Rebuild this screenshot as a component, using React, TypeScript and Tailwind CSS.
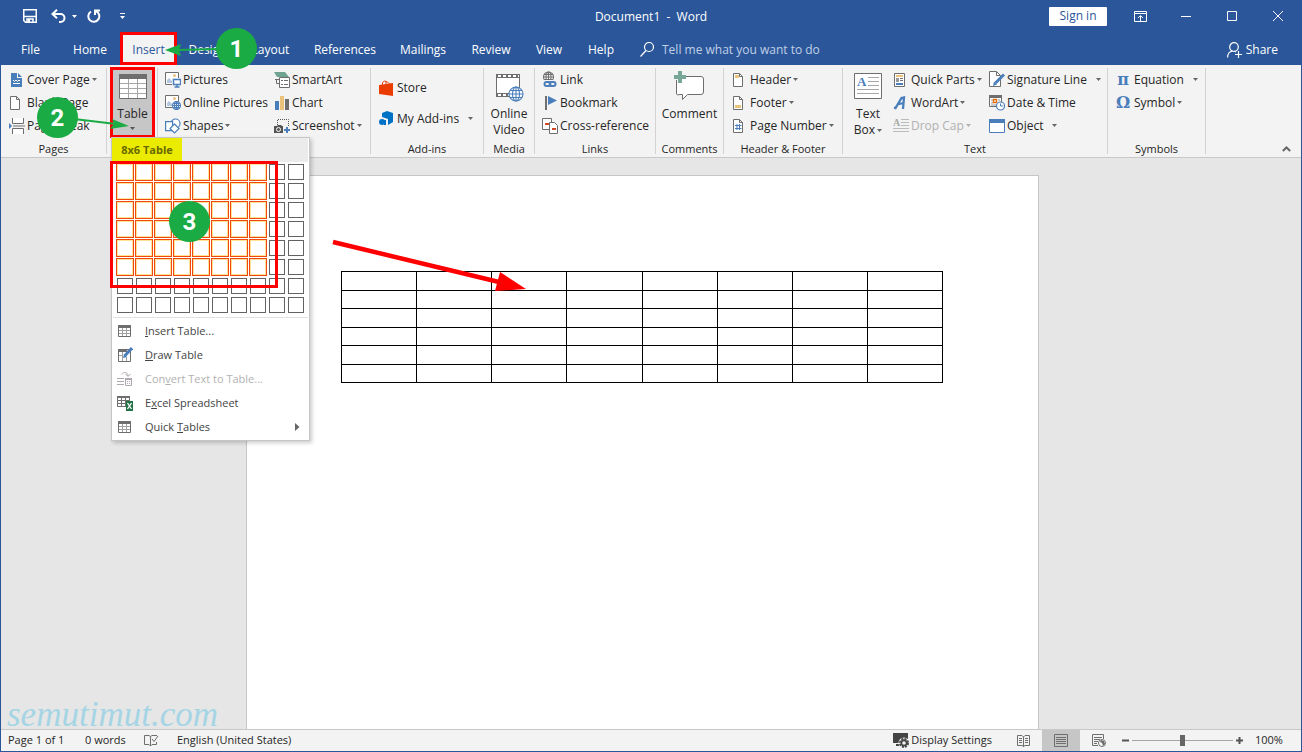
import React, { FC, ReactNode } from "react";
import clsx from "clsx";

const BLUE = "#4a7ebb";
const GRAY = "#6e6e6e";

const Icon: FC<{ w: number; h: number; children: ReactNode }> = ({ w, h, children }) => (
  <svg width={w} height={h} viewBox={`0 0 ${w} ${h}`} fill="none" className="shrink-0" aria-hidden="true">
    {children}
  </svg>
);

const Caret: FC<{ className?: string }> = ({ className }) => (
  <svg width="5" height="3" viewBox="0 0 5 3" className={clsx("shrink-0", className)} aria-hidden="true">
    <path d="M0 0h5L2.500 3z" fill="currentColor" />
  </svg>
);

/* ---------- ribbon icons, 16px ---------- */

const CoverPageIcon = () => (
  <Icon w={16} h={16}>
    <path d="M2 1h6v5h5v9H2z" fill={BLUE} />
    <path d="M9 1l4 4H9z" fill={BLUE} />
    <path d="M4 8l1.500 1.500L7 8l1.500 1.500L10 8l1 1M4 11.500h7" stroke="#fff" />
  </Icon>
);

const PageIcon: FC<{ children?: ReactNode }> = ({ children }) => (
  <Icon w={16} h={16}>
    <path d="M1.500 1.500h6l3 3v10h-9z" fill="#fff" stroke={GRAY} />
    <path d="M7.500 1.500v3h3" stroke={GRAY} />
    {children}
  </Icon>
);

const PageBreakIcon = () => (
  <Icon w={16} h={16}>
    <path d="M4 0v5h11V0M4 16v-5h11v5" fill="#fff" />
    <path d="M3.500 0v5.500h11V0M3.500 16v-5.500h11V16M4 8h12" stroke={GRAY} />
    <path d="M0 5l3 3-3 3z" fill={BLUE} />
  </Icon>
);

const PictureBase = () => (
  <>
    <path d="M.5 1.500h13v12H.5z" fill="#fff" stroke={GRAY} />
    <path d="M2 12V9l2-2 3 3v2z" fill="#b4c7e0" />
    <circle cx="9.500" cy="4.500" r="1.500" fill="#ecc17a" />
  </>
);

const PicturesIcon = () => (
  <Icon w={16} h={17}>
    <PictureBase />
    <path d="M7 7h9v10H7z" fill="#f3f3f3" />
    <path d="M8.500 8.500h7v5h-7zM12 14v2M9.500 16h5" fill="#fff" stroke={BLUE} strokeWidth="1.400" />
  </Icon>
);

const Globe: FC<{ cx: number; cy: number; r: number; color?: string }> = ({ cx, cy, r, color = BLUE }) => (
  <g stroke={color} strokeWidth="1.100">
    <circle cx={cx} cy={cy} r={r} fill="#fff" />
    <ellipse cx={cx} cy={cy} rx={r / 2} ry={r} />
    <path d={`M${cx - r} ${cy}h${2 * r}M${cx} ${cy - r}v${2 * r}M${cx - r * 0.85} ${cy - r / 2}h${r * 1.7}M${cx - r * 0.85} ${cy + r / 2}h${r * 1.7}`} />
  </g>
);

const OnlinePicturesIcon = () => (
  <Icon w={16} h={17}>
    <PictureBase />
    <Globe cx={11.5} cy={11.5} r={4} />
  </Icon>
);

const ShapesIcon = () => (
  <Icon w={16} h={16}>
    <circle cx="10.500" cy="5.500" r="4.500" fill="#fff" stroke={BLUE} strokeWidth="1.200" />
    <path d="M.6 3.600h7v9h-7z" fill="#fff" stroke={BLUE} strokeWidth="1.200" />
    <path d="M9.500 6l4.500 4.500L9.500 15 5 10.500z" fill="#fff" stroke={BLUE} strokeWidth="1.200" />
  </Icon>
);

const SmartArtIcon = () => (
  <Icon w={16} h={16}>
    <path d="M0 0h11l4 5H3z" fill="#6fa590" />
    <path d="M5.500 5.500h10v10h-10z" fill="#fff" stroke={GRAY} />
    <path d="M7 8.500h2M10 8.500h4M7 12.500h2M10 12.500h4" stroke={GRAY} />
    <path d="M2.500 7v4.500H5M1 7.500h4" stroke={GRAY} />
  </Icon>
);

const ChartIcon = () => (
  <Icon w={16} h={16}>
    <path d="M1 6h4v9H1z" fill={BLUE} />
    <path d="M6 1h4v14H6z" fill="#ecc17a" />
    <path d="M11 4h4v11h-4z" fill={GRAY} />
  </Icon>
);

const ScreenshotIcon = () => (
  <Icon w={16} h={16}>
    <path d="M3.500 7V1.500h11V8" stroke="#555" strokeDasharray="1 1" />
    <path d="M0 8h3l1-1h3l1 1h1v7H0z" fill="#555" />
    <circle cx="4.500" cy="11.500" r="2" fill="#555" stroke="#fff" />
    <path d="M13 9v6M10 12h6" stroke={BLUE} strokeWidth="2" />
  </Icon>
);

const StoreIcon = () => (
  <Icon w={15} h={16}>
    <path d="M3.500 5V2.500l2-1.500 3 1 2 2M7 4V2" stroke="#eb3c00" />
    <path d="M0 5l14-2v13L0 14z" fill="#eb3c00" />
  </Icon>
);

const AddinsIcon = () => (
  <Icon w={15} h={15}>
    <path d="M8 0l6 2v9l-5 3V8L3 6V2z" fill="#0072c6" />
    <circle cx="3" cy="11" r="3" fill="#0072c6" />
    <path d="M4 9h3v5H5z" fill="#0072c6" />
  </Icon>
);

const OnlineVideoIcon = () => (
  <Icon w={29} h={29}>
    <path d="M1.500 1.500h23v22h-23z" fill="#fff" stroke={GRAY} />
    <path d="M1 3h24M1 22h24" stroke={GRAY} strokeWidth="4" />
    <path d="M3 3h21M3 22h21" stroke="#fff" strokeWidth="2" strokeDasharray="3 2" />
    <Globe cx={21} cy={21} r={7} />
  </Icon>
);

const LinkIcon = () => (
  <Icon w={16} h={17}>
    <Globe cx={6.5} cy={6} r={5} color={GRAY} />
    <path d="M1 9h15v8H1z" fill="#f3f3f3" />
    <path d="M8 11H4.500a2 2 0 000 4H7l2-2.500M8 15h3.500a2 2 0 000-4H9l-2 2.500" stroke={BLUE} strokeWidth="2" />
  </Icon>
);

const BookmarkIcon = () => (
  <Icon w={16} h={16}>
    <path d="M3 1h2v14H3z" fill={GRAY} />
    <path d="M6 1l9 4.500L6 10z" fill={BLUE} />
  </Icon>
);

const CrossRefIcon = () => (
  <Icon w={16} h={16}>
    <path d="M.5.500h9v11h-9z" fill="#fff" stroke={GRAY} />
    <path d="M7.500 4.500h5l3 3v8h-8z" fill="#fff" stroke={GRAY} />
    <path d="M3 5h4v2H3zM10 10h4v2h-4z" fill="#d24726" />
  </Icon>
);

const CommentIcon = () => (
  <Icon w={32} h={30}>
    <path d="M6 5.500h21a2.500 2.500 0 012.500 2.500v13a2.500 2.500 0 01-2.500 2.500H13.500l-5 5v-5H5A1.500 1.500 0 012.500 22V9" fill="#fff" stroke={GRAY} />
    <path d="M4 0h4v4h4v4H8v4H4V8H0V4h4z" fill="#76a797" />
  </Icon>
);

const TextBoxIcon = () => (
  <Icon w={28} h={26}>
    <path d="M.5.500h27v25H.5z" fill="#fff" stroke={GRAY} />
    <path d="M14 4.500h11M14 8.500h11M14 12.500h11M3 16.500h22M3 20.500h22" stroke="#a6a6a6" />
    <text x="3" y="13" fontSize="13" fontWeight="bold" fill={BLUE} fontFamily="Liberation Serif, serif">A</text>
  </Icon>
);

const QuickPartsIcon = () => (
  <Icon w={14} h={16}>
    <path d="M1.500 1.500h10v13h-10z" fill="#fff" stroke={GRAY} />
    <path d="M3 3h7v2H3z" fill="#ecc17a" />
    <path d="M3 6h3v4H3z" fill="#999" />
    <path d="M7 6.500h3M7 8.500h3" stroke={GRAY} />
    <path d="M3 11h7v2H3z" fill={BLUE} />
  </Icon>
);

const WordArtIcon = () => (
  <Icon w={14} h={16}>
    <path d="M1 12.500l1.500.5L8.500 3l2.500-.5-1 11.500M4 9.500l6.500-1.500" stroke={BLUE} strokeWidth="2.300" />
  </Icon>
);

const DropCapIcon = () => (
  <Icon w={16} h={16}>
    <path d="M8 1.500h8M8 4.500h8M8 7.500h8M0 10.500h16M0 13.500h16" stroke="#bbb" />
    <text x="0" y="8" fontSize="10" fontWeight="bold" fill="#aaa" fontFamily="Liberation Serif, serif">A</text>
  </Icon>
);

const SignatureIcon = () => (
  <Icon w={16} h={17}>
    <path d="M.5.500h7l4 4v11H.5z" fill="#fff" stroke={GRAY} />
    <path d="M7.500.500v4h4" stroke={GRAY} />
    <path d="M15 3.500L6.500 12" stroke={BLUE} strokeWidth="3" />
    <path d="M5 10.500l3 3-4 1.500z" fill={BLUE} />
  </Icon>
);

const DateIcon = () => (
  <Icon w={16} h={17}>
    <path d="M.5 1.500h12v11H.5z" fill="#fff" stroke={GRAY} />
    <path d="M0 1h13v3H0z" fill={GRAY} />
    <path d="M2 6h2M2 9h2M9 6h2M2 11h5" stroke="#999" />
    <path d="M4.500 5.500h3v3h-3z" stroke="#e36c09" strokeWidth="1.400" />
    <circle cx="11.500" cy="12" r="4" fill="#fff" stroke={BLUE} strokeWidth="1.200" />
    <path d="M11.500 9.500V12H14" stroke={BLUE} />
  </Icon>
);

const ObjectIcon = () => (
  <Icon w={16} h={16}>
    <path d="M.5 1.500h15v13H.5z" fill="#fff" stroke={BLUE} />
    <path d="M0 1h16v4H0z" fill={BLUE} />
  </Icon>
);

const Glyph: FC<{ children: ReactNode }> = ({ children }) => (
  <span className="w-[14px] text-center font-['DejaVu_Serif',serif] text-base leading-4 font-bold text-[#4a7ebb]">
    {children}
  </span>
);

const BigTableIcon = () => (
  <Icon w={28} h={25}>
    <path d="M.5.500h27v24H.5z" fill="#fff" stroke={GRAY} />
    <path d="M0 0h28v5H0z" fill={GRAY} />
    <path d="M9.500 5v19M18.500 5v19M1 9.500h26M1 14.500h26M1 19.500h26" stroke="#a6a6a6" />
  </Icon>
);

/* ---------- menu icons ---------- */

const SmallTableIcon = () => (
  <Icon w={16} h={16}>
    <path d="M1.500 2.500h12v11h-12z" fill="#fff" stroke={GRAY} />
    <path d="M1 2h13v3H1z" fill={GRAY} />
    <path d="M5.500 5v8M9.500 5v8M2 7.500h11M2 10.500h11" stroke="#a0a0a0" />
  </Icon>
);

const DrawTableIcon = () => (
  <Icon w={16} h={16}>
    <path d="M1.500 2.500h12v12h-12z" fill="#fff" stroke={GRAY} />
    <path d="M1 2h9v3H1z" fill={GRAY} />
    <path d="M5.500 5v9M2 8.500h4M9.500 10v4" stroke="#a0a0a0" />
    <path d="M15 1L8 8.500" stroke={BLUE} strokeWidth="3" />
    <path d="M7 7l3 3-4 1z" fill={BLUE} />
  </Icon>
);

const ConvertIcon = () => (
  <Icon w={16} h={16}>
    <path d="M0 7.500h7M0 10.500h7M0 13.500h7" stroke="#b0a8b0" />
    <path d="M5 3.500c1-3 6-3 6 1.500M8.500 3L11 5.500 13.500 3" stroke="#b0a8b0" />
    <path d="M8.500 7.500h6v7h-6z" stroke="#b0a8b0" />
    <path d="M8 7h7v2H8zM10 10h1v1h-1zM12 10h1v1h-1zM10 12h1v1h-1zM12 12h1v1h-1z" fill="#b0a8b0" />
  </Icon>
);

const ExcelIcon = () => (
  <Icon w={16} h={16}>
    <path d="M.5 1.500h12v10H.5z" fill="#fff" stroke={GRAY} />
    <path d="M0 1h13v2H0z" fill={GRAY} />
    <path d="M4.500 3v8M8.500 3v8M1 5.500h12M1 8.500h12" stroke={GRAY} />
    <path d="M9 6h7v10H9z" fill="#217346" />
    <path d="M10.500 8l4 6M14.500 8l-4 6" stroke="#fff" strokeWidth="1.300" />
  </Icon>
);

/* ---------- ribbon pieces ---------- */

interface GroupI {
  label: string;
  width: string;
  hideLabel?: boolean;
  children: ReactNode;
}

const Group: FC<GroupI> = ({ label, width, hideLabel, children }) => (
  <section aria-label={label} className={clsx("relative flex h-[86px] shrink-0 flex-col border-r border-[#d2d2d2]", width)}>
    <div className="flex h-[70px] shrink-0 items-start">{children}</div>
    {!hideLabel && <div className="flex h-[22px] shrink-0 items-center justify-center text-[11px] whitespace-nowrap">{label}</div>}
  </section>
);

interface ItemI {
  icon: ReactNode;
  text: string;
  caret?: boolean;
  split?: boolean;
  disabled?: boolean;
}

const Item: FC<ItemI> = ({ icon, text, caret, split, disabled }) => (
  <button
    type="button"
    disabled={disabled}
    className={clsx("flex h-[23px] items-center whitespace-nowrap", disabled && "text-[#b1b1b1]")}
  >
    <span className="flex w-[18px] shrink-0 items-center">{icon}</span>
    {text}
    {caret && <Caret className={clsx(split ? "ml-[9px]" : "ml-[2px]", disabled ? "text-[#b1b1b1]" : "text-[#666]")} />}
  </button>
);

const tabs = [
  { name: "File", width: "w-[59px]" },
  { name: "Home", width: "w-[60px]" },
  { name: "Insert", width: "w-[57px]" },
  { name: "Design", width: "w-[61px]" },
  { name: "Layout", width: "w-[65px]" },
  { name: "References", width: "w-[84px]" },
  { name: "Mailings", width: "w-[72px]" },
  { name: "Review", width: "w-[64px]" },
  { name: "View", width: "w-[52px]" },
  { name: "Help", width: "w-[52px]" },
];

const TitleBar = () => (
  <header className="flex h-8 items-center justify-between">
    <div className="flex flex-1 items-center">
      <button type="button" aria-label="Save" className="ml-[22px]">
        <Icon w={14} h={14}>
          <path d="M.750.750h12.500v12.500H2.500L.750 11.500z" stroke="#fff" strokeWidth="1.500" />
          <path d="M1 7.500h12M4 13V10h6v3" stroke="#fff" strokeWidth="1.500" />
          <path d="M5 10h2v3H5z" fill="#fff" />
        </Icon>
      </button>
      <button type="button" aria-label="Undo" className="ml-[14px] flex items-center gap-[5px] text-white">
        <Icon w={16} h={14}>
          <path d="M1.500 5h8a4 4 0 010 8H8M6 .8L1.500 5 6 9.200" stroke="#fff" strokeWidth="2" />
        </Icon>
        <Caret />
      </button>
      <button type="button" aria-label="Redo" className="ml-[10px]">
        <Icon w={14} h={14}>
          <path d="M4 2.500A5.500 5.500 0 108.500 2M8 6V1.500h5" stroke="#fff" strokeWidth="2" />
        </Icon>
      </button>
      <button type="button" aria-label="Customize Quick Access Toolbar" className="ml-[19px]">
        <Icon w={5} h={7}>
          <path d="M0 .5h5" stroke="#fff" />
          <path d="M0 3h5L2.500 6z" fill="#fff" />
        </Icon>
      </button>
    </div>
    <h1 className="pt-[2px] whitespace-pre text-white">Document1  -  Word</h1>
    <div className="flex flex-1 items-center justify-end">
      <button type="button" className="mr-[10px] h-[19px] w-[58px] rounded-[1px] bg-white text-[#2b579a]">Sign in</button>
      <button type="button" aria-label="Ribbon Display Options" className="flex h-8 w-[46px] items-center justify-center">
        <Icon w={13} h={11}>
          <path d="M.5.500h12v10H.5zM0 2.500h13M6.500 10V5M4 7l2.500-2.500L9 7" stroke="#fff" />
        </Icon>
      </button>
      <button type="button" aria-label="Minimize" className="flex h-8 w-[46px] items-center justify-center">
        <Icon w={10} h={1}><path d="M0 .5h10" stroke="#fff" /></Icon>
      </button>
      <button type="button" aria-label="Maximize" className="flex h-8 w-[46px] items-center justify-center">
        <Icon w={10} h={10}><path d="M.5.500h9v9h-9z" stroke="#fff" /></Icon>
      </button>
      <button type="button" aria-label="Close" className="flex h-8 w-[46px] items-center justify-center">
        <Icon w={10} h={10}><path d="M0 0l10 10M10 0L0 10" stroke="#fff" /></Icon>
      </button>
    </div>
  </header>
);

const TabBar = () => (
  <nav className="flex h-[33px] text-white">
    {tabs.map(({ name, width }) => (
      <button
        key={name}
        type="button"
        className={clsx(
          "shrink-0 pt-[2px] whitespace-nowrap",
          width,
          name === "Insert" && "border-[3px] border-[#ff0000] bg-[#f3f3f3] text-[#2b579a]"
        )}
      >
        {name}
      </button>
    ))}
    <label className="flex flex-1 items-center gap-2 pl-[13px] pt-[2px]">
      <Icon w={14} h={15}>
        <circle cx="9" cy="5" r="4.500" stroke="#fff" strokeWidth="1.200" />
        <path d="M6 8.500L.5 14.500" stroke="#fff" strokeWidth="1.200" />
      </Icon>
      <input
        type="text"
        aria-label="Tell me"
        placeholder="Tell me what you want to do"
        className="w-60 bg-transparent outline-none placeholder:text-[#c0cfe6]"
      />
    </label>
    <button type="button" className="flex items-center gap-1 pr-[23px] pt-[2px]">
      <Icon w={15} h={16}>
        <circle cx="7" cy="5" r="4.300" stroke="#fff" strokeWidth="1.200" />
        <path d="M.6 15.500c0-4 2-6 5-6.500M8 9.500l1 .5M11.500 9v7M8 12.500h7" stroke="#fff" strokeWidth="1.200" />
      </Icon>
      Share
    </button>
  </nav>
);

/* ---------- table menu ---------- */

const COLS = 8;
const ROWS = 6;
const cells = Array.from({ length: 80 }, (_, i) => ({
  id: i,
  selected: i % 10 < COLS && Math.floor(i / 10) < ROWS,
}));

const Step: FC<{ n: number; className: string }> = ({ n, className }) => (
  <span
    className={clsx(
      "pointer-events-none absolute z-30 flex h-[41px] w-[41px] items-center justify-center rounded-full bg-[#1bab45] font-['Roboto',sans-serif] text-2xl font-bold text-white",
      className
    )}
  >
    {n}
  </span>
);

const MenuItem: FC<{ icon: ReactNode; children: ReactNode; disabled?: boolean; arrow?: boolean }> = ({
  icon,
  children,
  disabled,
  arrow,
}) => (
  <button
    type="button"
    role="menuitem"
    disabled={disabled}
    className={clsx("flex h-6 w-full items-center pl-[5px] pr-[9px] text-left", disabled ? "text-[#b1b1b1]" : "text-[#444]")}
  >
    <span className="w-7 shrink-0">{icon}</span>
    <span className="flex-1 whitespace-nowrap">{children}</span>
    {arrow && <Icon w={5} h={8}><path d="M0 0l4.500 4L0 8z" fill="#666" /></Icon>}
  </button>
);

const TableMenu = () => (
  <div role="menu" className="absolute top-[69px] left-1 z-20 w-[199px] border border-[#c6c6c6] bg-white pb-px text-[11px] shadow-[2px_2px_4px_rgba(0,0,0,0.2)]">
    <div className="mr-px flex h-6 bg-[#ebebeb] font-bold">
      <span className="flex w-[70px] items-center justify-center whitespace-nowrap bg-[#ebeb00] text-[#6a6a00]">8x6 Table</span>
    </div>
    <div className="grid grid-cols-10 gap-px py-px pr-1 pl-1">
      {cells.map(({ id, selected }) =>
        selected ? (
          <button key={id} type="button" aria-label="Table cell" className="h-[18px] w-[18px] border border-[#ef4810] bg-white ring-1 ring-inset ring-[#ffe294]" />
        ) : (
          <button key={id} type="button" aria-label="Table cell" className="m-px h-4 w-4 border border-[#636363] bg-white" />
        )
      )}
    </div>
    <div className="mx-px mt-[2px] mb-px h-px bg-[#e1e1e1]" />
    <MenuItem icon={<SmallTableIcon />}><u>I</u>nsert Table...</MenuItem>
    <MenuItem icon={<DrawTableIcon />}><u>D</u>raw Table</MenuItem>
    <MenuItem icon={<ConvertIcon />} disabled>Con<u>v</u>ert Text to Table...</MenuItem>
    <MenuItem icon={<ExcelIcon />}>E<u>x</u>cel Spreadsheet</MenuItem>
    <MenuItem icon={<SmallTableIcon />} arrow>Quick <u>T</u>ables</MenuItem>
    <div className="pointer-events-none absolute top-[23px] -left-[2px] h-[127px] w-[168px] border-[3px] border-[#ff0000]" />
    <Step n={3} className="top-[63px] left-[57px]" />
  </div>
);

const Ribbon = () => (
  <div className="relative flex h-[93px] shrink-0 border-b border-[#c8c8c8] bg-[#f3f3f3] pt-[3px]">
    <Group label="Pages" width="w-[106px]">
      <div className="flex flex-col pl-2">
        <Item icon={<CoverPageIcon />} text="Cover Page" caret />
        <Item icon={<PageIcon />} text="Blank Page" />
        <Item icon={<PageBreakIcon />} text="Page Break" />
      </div>
    </Group>
    <Group label="Tables" width="w-[51px]" hideLabel>
      <button
        type="button"
        className="-mt-px ml-[3px] flex h-[71px] w-[45px] flex-col items-center border-[3px] border-[#ff0000] bg-[#c6c6c6] pt-1"
      >
        <BigTableIcon />
        <span className="mt-[7px] leading-4">Table</span>
        <Caret className="mt-[5px] text-[#555]" />
      </button>
      <TableMenu />
    </Group>
    <Group label="Illustrations" width="w-[213px]" hideLabel>
      <div className="flex w-[109px] flex-col pl-[7px]">
        <Item icon={<PicturesIcon />} text="Pictures" />
        <Item icon={<OnlinePicturesIcon />} text="Online Pictures" />
        <Item icon={<ShapesIcon />} text="Shapes" caret />
      </div>
      <div className="flex flex-col pl-[7px]">
        <Item icon={<SmartArtIcon />} text="SmartArt" />
        <Item icon={<ChartIcon />} text="Chart" />
        <Item icon={<ScreenshotIcon />} text="Screenshot" caret />
      </div>
    </Group>
    <Group label="Add-ins" width="w-[113px]">
      <div className="flex flex-col gap-2 pt-2 pl-2">
        <Item icon={<StoreIcon />} text="Store" />
        <Item icon={<AddinsIcon />} text="My Add-ins" caret split />
      </div>
    </Group>
    <Group label="Media" width="w-[51px]">
      <button type="button" className="flex w-full flex-col items-center pt-[5px] leading-4">
        <OnlineVideoIcon />
        <span className="mt-1">Online<br />Video</span>
      </button>
    </Group>
    <Group label="Links" width="w-[121px]">
      <div className="flex flex-col pl-[7px]">
        <Item icon={<LinkIcon />} text="Link" />
        <Item icon={<BookmarkIcon />} text="Bookmark" />
        <Item icon={<CrossRefIcon />} text="Cross-reference" />
      </div>
    </Group>
    <Group label="Comments" width="w-[68px]">
      <button type="button" className="flex w-full flex-col items-center pt-[3px] leading-4">
        <CommentIcon />
        <span className="mt-[5px]">Comment</span>
      </button>
    </Group>
    <Group label="Header & Footer" width="w-[119px]">
      <div className="flex flex-col pl-2">
        <Item icon={<PageIcon><path d="M3 3h4v3H3z" fill="#ecc17a" /></PageIcon>} text="Header" caret />
        <Item icon={<PageIcon><path d="M3 10h6v3H3z" fill="#ecc17a" /></PageIcon>} text="Footer" caret />
        <Item
          icon={<PageIcon><path d="M5 6v6M7.500 6v6M3 7.500h6.500M3 10.500h6.500" stroke={BLUE} /></PageIcon>}
          text="Page Number"
          caret
        />
      </div>
    </Group>
    <Group label="Text" width="w-[265px]">
      <button type="button" className="ml-[10px] flex w-[30px] flex-col items-center pt-[5px] leading-4">
        <TextBoxIcon />
        <span className="mt-[7px]">Text</span>
        <span className="flex items-center gap-[2px]">Box<Caret className="text-[#666]" /></span>
      </button>
      <div className="flex w-[98px] flex-col pl-[10px]">
        <Item icon={<QuickPartsIcon />} text="Quick Parts" caret />
        <Item icon={<WordArtIcon />} text="WordArt" caret />
        <Item icon={<DropCapIcon />} text="Drop Cap" caret disabled />
      </div>
      <div className="flex flex-col pl-2">
        <Item icon={<SignatureIcon />} text="Signature Line" caret split />
        <Item icon={<DateIcon />} text="Date & Time" />
        <Item icon={<ObjectIcon />} text="Object" caret split />
      </div>
    </Group>
    <Group label="Symbols" width="w-[98px]">
      <div className="flex flex-col pl-2">
        <Item icon={<Glyph>π</Glyph>} text="Equation" caret split />
        <Item icon={<Glyph>Ω</Glyph>} text="Symbol" caret />
      </div>
    </Group>
    <button type="button" aria-label="Collapse the Ribbon" className="mt-auto ml-auto pr-[10px] pb-[5px]">
      <Icon w={9} h={6}><path d="M.8 5l3.700-3.500L8.200 5" stroke="#666" strokeWidth="2" /></Icon>
    </button>
  </div>
);

const StatusBar = () => (
  <footer className="flex h-[22px] shrink-0 items-center border-t border-[#c8c8c8] bg-[#f3f3f3] text-[11px] whitespace-nowrap">
    <span className="w-[77px] pl-[7px]">Page 1 of 1</span>
    <span className="w-[60px] pl-[7px]">0 words</span>
    <button type="button" aria-label="Proofing" className="w-8 pl-[6px]">
      <Icon w={15} h={13}>
        <path d="M6.500 12V2.500L5 1.500H.5v9H5l1.500 1.500L8 10.500h4.500V8M6.500 2.500L8 1.500h5M8 5l2 2.500L14 2" stroke={GRAY} />
      </Icon>
    </button>
    <span className="pl-[7px]">English (United States)</span>
    <button type="button" className="ml-auto flex items-center gap-[2px]">
      <Icon w={16} h={15}>
        <path d="M0 0h15v10H0zM3 11h4v2H3z" fill="#444" />
        <circle cx="11" cy="10" r="3" fill="#f3f3f3" stroke="#f3f3f3" strokeWidth="5" />
        <circle cx="11" cy="10" r="4" stroke="#444" strokeWidth="2" strokeDasharray="2 1.140" />
        <circle cx="11" cy="10" r="2.600" stroke="#444" strokeWidth="1.600" />
      </Icon>
      Display Settings
    </button>
    <button type="button" aria-label="Read Mode" className="ml-3 flex h-[21px] w-[38px] items-center justify-center">
      <Icon w={13} h={12}>
        <path d="M6.500 11.500V2L5 .5H.5v10H5l1.500 1 1.500-1h4.500V.500H8L6.500 2M2 3.500h3M2 5.500h3M2 7.500h3M8 3.500h3M8 5.500h3M8 7.500h3" stroke={GRAY} />
      </Icon>
    </button>
    <button type="button" aria-label="Print Layout" className="flex h-[21px] w-[38px] items-center justify-center bg-[#c6c6c6]">
      <Icon w={14} h={13}>
        <path d="M.5.500h13v12H.5zM2 3.500h10M2 5.500h10M2 7.500h10M2 9.500h10" stroke={GRAY} />
      </Icon>
    </button>
    <button type="button" aria-label="Web Layout" className="flex h-[21px] w-[38px] items-center justify-center">
      <Icon w={14} h={13}>
        <path d="M11.500 5V.500H.5v11H6M2 3.500h8M2 5.500h6M2 7.500h4M2 9.500h3" stroke={GRAY} />
        <circle cx="10" cy="9" r="3.500" fill="#fff" stroke={GRAY} />
        <path d="M9 6l3 1 1 3-2 2-1-3-2-1z" fill={GRAY} />
      </Icon>
    </button>
    <button type="button" aria-label="Zoom out" className="ml-1">
      <Icon w={7} h={7}><path d="M0 3.500h7" stroke="#555" strokeWidth="2" /></Icon>
    </button>
    <input
      type="range"
      aria-label="Zoom"
      defaultValue="50"
      className="mx-[3px] h-3 w-[101px] appearance-none bg-transparent bg-[linear-gradient(#a6a6a6,#a6a6a6)] bg-[length:100%_1px] bg-center bg-no-repeat [&::-webkit-slider-thumb]:h-[11px] [&::-webkit-slider-thumb]:w-[5px] [&::-webkit-slider-thumb]:appearance-none [&::-webkit-slider-thumb]:bg-[#666]"
    />
    <button type="button" aria-label="Zoom in">
      <Icon w={7} h={7}><path d="M0 3.500h7M3.500 0v7" stroke="#555" strokeWidth="2" /></Icon>
    </button>
    <span className="w-[58px] pl-3">100%</span>
  </footer>
);

const rows = Array.from({ length: ROWS }, (_, r) => r);
const columns = Array.from({ length: COLS }, (_, c) => c);

const App: FC = () => {
  return (
    <div className="relative flex h-screen flex-col overflow-hidden border-x border-b border-[#2b579a] bg-[#2b579a] font-['Open_Sans','Noto_Sans',sans-serif] text-xs text-[#262626]">
      <TitleBar />
      <TabBar />
      <Ribbon />
      <main className="relative flex min-h-0 flex-1 justify-center bg-[#e6e6e6] pt-[17px] pr-[17px]">
        <article className="w-[793px] border-x border-t border-[#c6c6c6] bg-white pt-[95px] pr-[95px] pl-[94px]">
          <table className="h-28 w-full table-fixed border-collapse">
            <tbody>
              {rows.map((r) => (
                <tr key={r}>
                  {columns.map((c) => (
                    <td key={c} className="border border-black p-0" />
                  ))}
                </tr>
              ))}
            </tbody>
          </table>
        </article>
        <span className="pointer-events-none absolute bottom-0 left-[6px] font-['Liberation_Serif',serif] text-[35px] leading-7 text-[#a5d5e5] italic">
          semutimut.com
        </span>
      </main>
      <StatusBar />

      {/* callouts */}
      <svg width="540" height="300" viewBox="0 0 540 300" className="pointer-events-none absolute top-0 -left-px z-20" aria-hidden="true">
        <path d="M220 49L178 50M74 119l42 5" stroke="#1bab45" strokeWidth="2" />
        <path d="M165 50l16-6-2 6 2 6zM129 126l-17-7 2 5-4 5z" fill="#1bab45" />
        <path d="M333 242l166 40" stroke="#ff0000" strokeWidth="4.500" />
        <path d="M526 289l-26-17-5 19z" fill="#ff0000" />
      </svg>
      <Step n={1} className="top-[28px] left-[215px]" />
      <Step n={2} className="top-[97px] left-[36px]" />
    </div>
  );
};

export default App;
